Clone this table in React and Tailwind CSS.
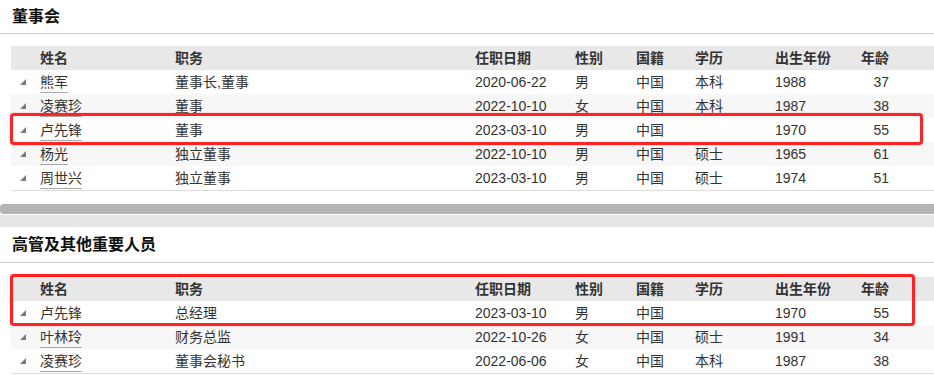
import React from "react";

const FONT = { fontFamily: '"Liberation Sans", Arial, "Noto Sans CJK SC", sans-serif' };

const board = [
  ["熊军", "董事长,董事", "2020-06-22", "男", "中国", "本科", "1988", "37"],
  ["凌赛珍", "董事", "2022-10-10", "女", "中国", "本科", "1987", "38"],
  ["卢先锋", "董事", "2023-03-10", "男", "中国", "", "1970", "55"],
  ["杨光", "独立董事", "2022-10-10", "男", "中国", "硕士", "1965", "61"],
  ["周世兴", "独立董事", "2023-03-10", "男", "中国", "硕士", "1974", "51"],
];

const managers = [
  ["卢先锋", "总经理", "2023-03-10", "男", "中国", "", "1970", "55"],
  ["叶林玲", "财务总监", "2022-10-26", "女", "中国", "硕士", "1991", "34"],
  ["凌赛珍", "董事会秘书", "2022-06-06", "女", "中国", "本科", "1987", "38"],
];

const cols = "grid grid-cols-[29px_135px_300px_100px_61px_59px_80px_86px_28px_1fr] items-center";

function Corner() {
  return (
    <svg width="6" height="6" viewBox="0 0 6 6" className="ml-[9px]">
      <polygon points="6,0 6,6 0,6" fill="#7a7a7a" />
    </svg>
  );
}

function Table({ rows, box }) {
  return (
    <div className="relative ml-[11px] border-b border-[#dcdcdc] text-[14px] text-[#333]">
      <div className={`${cols} h-6 bg-[#e8e8e8] font-bold leading-6`}>
        <span />
        <span>姓名</span>
        <span>职务</span>
        <span>任职日期</span>
        <span>性别</span>
        <span>国籍</span>
        <span>学历</span>
        <span>出生年份</span>
        <span className="text-right whitespace-nowrap">年龄</span>
        <span />
      </div>
      {rows.map((r, i) => (
        <div key={i} className={`${cols} h-6 leading-6 ${i % 2 === 1 ? "bg-[#f7f7f7]" : "bg-white"}`}>
          <Corner />
          <span>
            <span className="border-b border-[#aaa] pb-[2px]">{r[0]}</span>
          </span>
          <span>{r[1]}</span>
          <span>{r[2]}</span>
          <span>{r[3]}</span>
          <span>{r[4]}</span>
          <span>{r[5]}</span>
          <span>{r[6]}</span>
          <span className="text-right">{r[7]}</span>
          <span />
        </div>
      ))}
      {box}
    </div>
  );
}

export default function App() {
  return (
    <div className="w-[934px] h-[375px] overflow-hidden bg-white" style={FONT}>
      {/* 董事会 */}
      <div className="h-[34px] border-b border-[#cccccc] pl-3 flex items-center">
        <h2 className="text-[16px] font-bold text-[#111] leading-none">董事会</h2>
      </div>
      <div className="mt-[12px]">
        <Table
          rows={board}
          box={
            <div className="absolute left-[-1px] top-[67px] w-[913px] h-[32px] rounded-[4px] border-[3px] border-[#ff2424] shadow-[0_0_1px_#ff2424]" />
          }
        />
      </div>

      {/* divider */}
      <div className="mt-[13px]">
        <div className="h-[10px] bg-[#b4b4b4] rounded-l-[4px]" />
        <div className="h-px bg-white" />
        <div className="h-[12px] bg-[#e6e6e6]" />
      </div>

      {/* 高管及其他重要人员 */}
      <div className="h-[36px] border-b border-[#cccccc] pl-3 flex items-center">
        <h2 className="text-[16px] font-bold text-[#111] leading-none">高管及其他重要人员</h2>
      </div>
      <div className="mt-[14px]">
        <Table
          rows={managers}
          box={
            <div className="absolute left-[-1px] top-[-3px] w-[905px] h-[52px] rounded-[4px] border-[3px] border-[#ff2424] shadow-[0_0_1px_#ff2424]" />
          }
        />
      </div>
    </div>
  );
}
